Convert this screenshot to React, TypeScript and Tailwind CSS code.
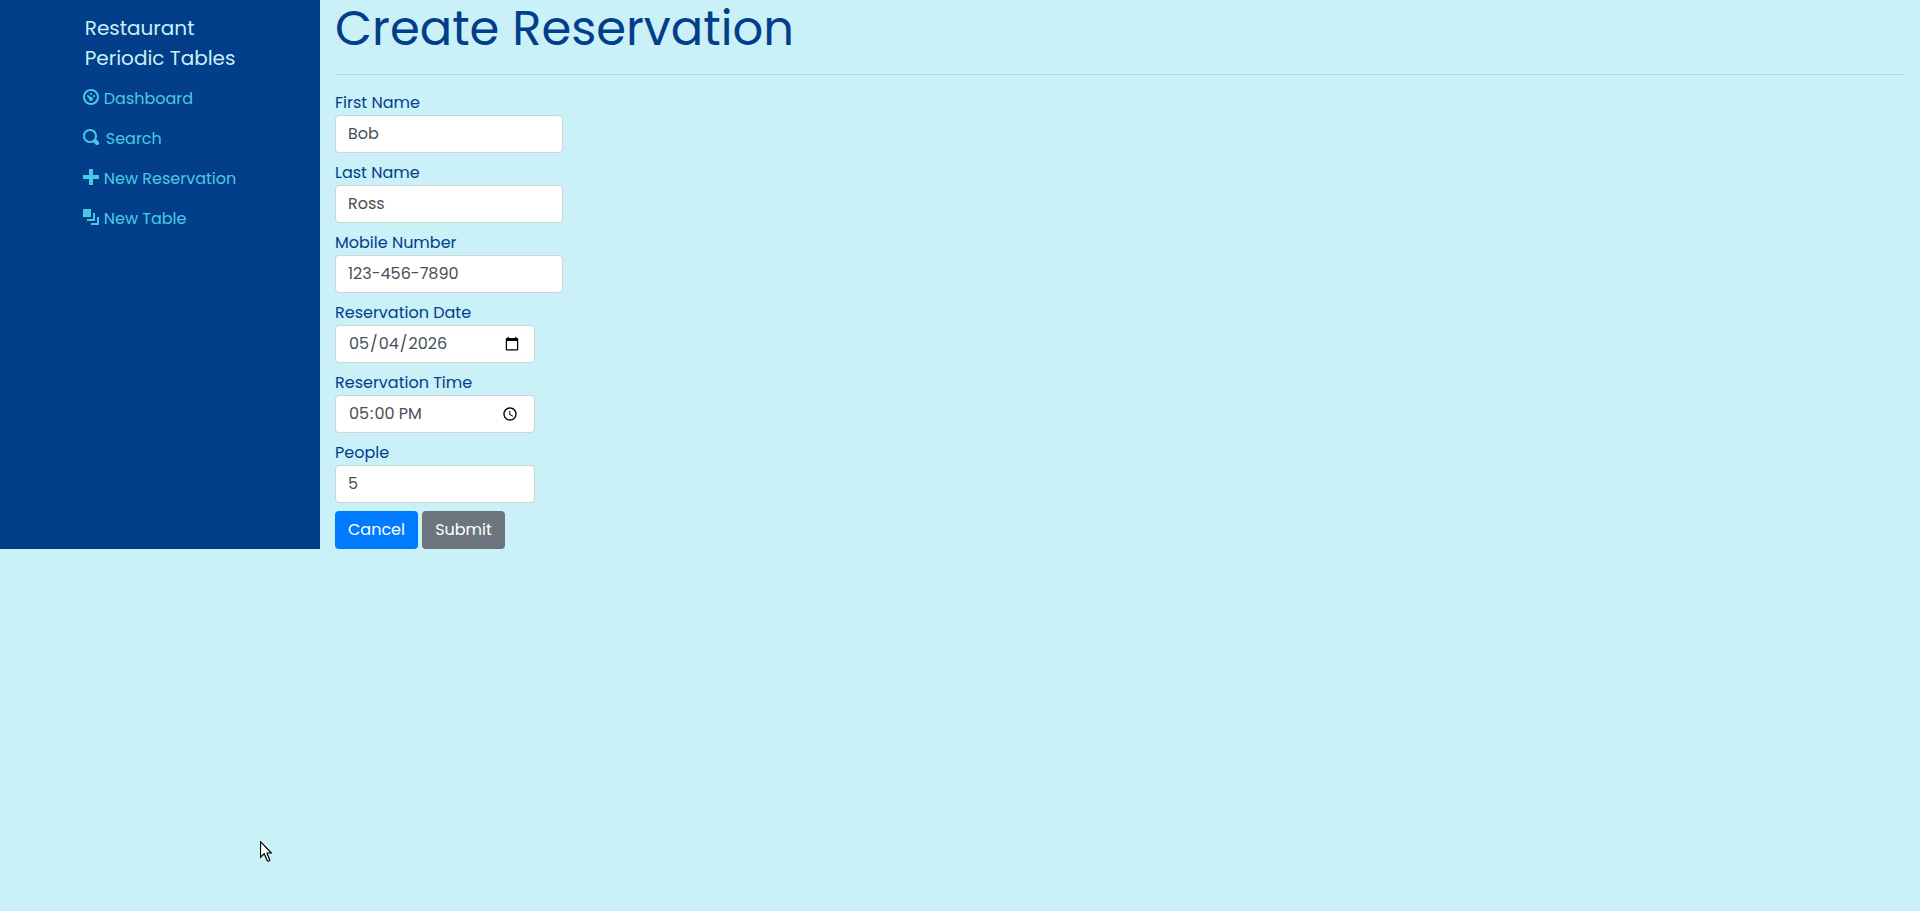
import type { InputHTMLAttributes } from "react";

const navItems = [
  {
    label: "Dashboard",
    gap: "gap-[5px]",
    path: "M4 0c-2.2 0-4 1.8-4 4s1.8 4 4 4 4-1.8 4-4-1.8-4-4-4zm0 1c1.66 0 3 1.34 3 3s-1.34 3-3 3-3-1.34-3-3 1.34-3 3-3zm0 1c-.28 0-.5.22-.5.5s.22.5.5.5.5-.22.5-.5-.22-.5-.5-.5zm-1.66 1a.5.5 0 0 0-.19.84l.91.91c-.02.08-.06.16-.06.25 0 .55.45 1 1 1s1-.45 1-1-.45-1-1-1c-.09 0-.17.04-.25.06l-.91-.91a.5.5 0 0 0-.44-.16.5.5 0 0 0-.06 0zm3.16 0c-.28 0-.5.22-.5.5s.22.5.5.5.5-.22.5-.5-.22-.5-.5-.5z",
  },
  {
    label: "Search",
    gap: "gap-[7px]",
    path: "M3.5 0c-1.93 0-3.5 1.57-3.5 3.5s1.57 3.5 3.5 3.5c.59 0 1.17-.14 1.66-.41a1 1 0 0 0 .13.13l1 1a1.02 1.02 0 1 0 1.44-1.44l-1-1a1 1 0 0 0-.16-.13c.27-.49.44-1.06.44-1.66 0-1.93-1.55-3.5-3.5-3.5zm0 1c1.39 0 2.5 1.11 2.5 2.5 0 .66-.24 1.27-.66 1.72-.01.01-.02.02-.03.03a1 1 0 0 0-.13.13c-.44.4-1.04.63-1.69.63-1.39 0-2.5-1.11-2.5-2.5s1.11-2.5 2.5-2.5z",
  },
  {
    label: "New Reservation",
    gap: "gap-[5px]",
    path: "M3 0v3h-3v2h3v3h2v-3h3v-2h-3v-3h-2z",
  },
  {
    label: "New Table",
    gap: "gap-[5px]",
    path: "M0 0v4h4v-4h-4zm5 2v3h-3v1h4v-4h-1zm2 2v3h-3v1h4v-4h-1z",
  },
];

type FieldProps = InputHTMLAttributes<HTMLInputElement> & {
  id: string;
  label: string;
  box: string;
};

const textBox = "w-[228px] pb-0.5";
const pickerBox = "w-[200px]";
const numberBox = "w-[200px] pb-0.5";

function Field({ id, label, box, ...input }: FieldProps) {
  return (
    <div className="flex flex-col items-start">
      <label htmlFor={id} className="leading-6">
        {label}
      </label>
      <input
        id={id}
        name={id}
        className={`h-[38px] rounded border border-[#ced4da] bg-white px-3 text-[#495057] ${box}`}
        {...input}
      />
    </div>
  );
}

export default function App() {
  return (
    <div className="relative min-h-screen bg-[#caf0f8] font-['Poppins','Inter',sans-serif] text-base text-[#023e8a]">
      <div className="flex">
        <aside className="flex w-1/6 shrink-0 justify-center bg-[#023e8a] pr-px">
          <nav className="pt-[13px]">
            <a href="#home" className="block pl-0.5 text-xl leading-[30px] text-[#caf0f8]">
              Restaurant
              <br />
              Periodic Tables
            </a>
            <ul className="pt-1.5">
              {navItems.map((item) => (
                <li key={item.label}>
                  <a href="#nav" className={`flex h-10 items-center text-[#48cae4] ${item.gap}`}>
                    <svg viewBox="0 0 8 8" className="mb-1 size-4 fill-current" aria-hidden="true">
                      <path d={item.path} />
                    </svg>
                    {item.label}
                  </a>
                </li>
              ))}
            </ul>
          </nav>
        </aside>
        <main className="min-w-0 grow px-[15px]">
          <h1 className="text-5xl leading-[58px]">Create Reservation</h1>
          <hr className="my-4 border-black/10" />
          <form className="flex flex-col gap-2" onSubmit={(e) => e.preventDefault()}>
            <Field id="first_name" label="First Name" box={textBox} type="text" defaultValue="Bob" />
            <Field id="last_name" label="Last Name" box={textBox} type="text" defaultValue="Ross" />
            <Field id="mobile_number" label="Mobile Number" box={textBox} type="tel" defaultValue="123-456-7890" />
            <Field id="reservation_date" label="Reservation Date" box={pickerBox} type="date" defaultValue="2026-05-04" />
            <Field id="reservation_time" label="Reservation Time" box={pickerBox} type="time" defaultValue="17:00" />
            <Field id="people" label="People" box={numberBox} type="number" defaultValue="5" />
            <div className="flex gap-1">
              <button type="button" className="h-[38px] w-[83px] rounded bg-[#007bff] text-white">
                Cancel
              </button>
              <button type="submit" className="h-[38px] w-[83px] rounded bg-[#6c757d] text-white">
                Submit
              </button>
            </div>
          </form>
        </main>
      </div>
      <svg viewBox="0 0 12 21" className="absolute top-[841px] left-[260px] h-[21px] w-3" aria-hidden="true">
        <path
          d="M.5 .7V16.3L4.2 12.8L7.2 19.6Q8.6 20.9 9.8 19.2L7 12H11.3Z"
          fill="white"
          stroke="black"
          strokeWidth="1.2"
        />
      </svg>
    </div>
  );
}
